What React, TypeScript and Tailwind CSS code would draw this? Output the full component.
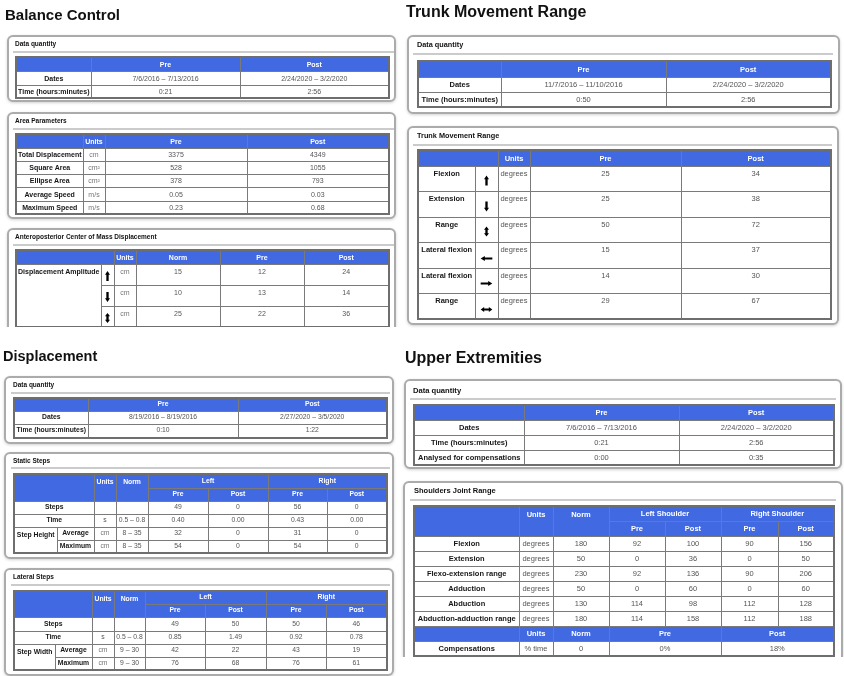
import React from 'react';

type CellProps = {
  children?: React.ReactNode;
  className?: string;
  colSpan?: number;
  rowSpan?: number;
};

const line = 'border border-[#7a7a7a]';

function Hd({ children, className = '', colSpan, rowSpan }: CellProps) {
  return (
    <th
      colSpan={colSpan}
      rowSpan={rowSpan}
      className={`${line} bg-[#4169e1] p-0 text-center font-bold whitespace-nowrap text-white ${className}`}
    >
      {children}
    </th>
  );
}

function Lb({ children, className = '', colSpan, rowSpan }: CellProps) {
  return (
    <td
      colSpan={colSpan}
      rowSpan={rowSpan}
      className={`${line} p-0 text-center font-bold whitespace-nowrap text-[#161616] ${className}`}
    >
      {children}
    </td>
  );
}

function Vl({ children, className = '', colSpan, rowSpan }: CellProps) {
  return (
    <td
      colSpan={colSpan}
      rowSpan={rowSpan}
      className={`${line} p-0 text-center whitespace-nowrap text-[#555] ${className}`}
    >
      {children}
    </td>
  );
}

type Dir = 'up' | 'down' | 'updown' | 'left' | 'right' | 'leftright';

function Arrow({ dir, className }: { dir: Dir; className?: string }) {
  const vertical = dir === 'up' || dir === 'down' || dir === 'updown';
  const paths: Record<Dir, string> = {
    up: 'M3 0 L6 4.6 H4.4 V12 H1.6 V4.6 H0 Z',
    down: 'M3 12 L6 7.4 H4.4 V0 H1.6 V7.4 H0 Z',
    updown: 'M3 0 L6 4 H4.4 V8 H6 L3 12 L0 8 H1.6 V4 H0 Z',
    left: 'M0 3 L5 0 V1.8 H14 V4.2 H5 V6 Z',
    right: 'M14 3 L9 0 V1.8 H0 V4.2 H9 V6 Z',
    leftright: 'M0 3 L4.2 0 V1.8 H9.8 V0 L14 3 L9.8 6 V4.2 H4.2 V6 Z',
  };
  return (
    <svg viewBox={vertical ? '0 0 6 12' : '0 0 14 6'} className={className}>
      <path d={paths[dir]} fill="#000" />
    </svg>
  );
}

function Card({
  className,
  title,
  titleClass,
  sepClass,
  children,
}: {
  className: string;
  title: string;
  titleClass: string;
  sepClass: string;
  children: React.ReactNode;
}) {
  return (
    <div
      className={`rounded-[6px] border-2 border-[#ababab] bg-white shadow-[0_1px_3px_rgba(0,0,0,0.18)] ${className}`}
    >
      <div className={`font-bold whitespace-nowrap text-[#111] ${titleClass}`}>{title}</div>
      <div className={`h-[2px] bg-[#cbcbcb] ${sepClass}`} />
      {children}
    </div>
  );
}

function BalanceControl() {
  return (
    <section className="h-[327px] overflow-hidden">
      <h1 className="h-[35px] pl-[5px] pt-[6px] text-[15px] leading-[18px] font-bold text-[#111]">
        Balance Control
      </h1>

      <Card
        className="ml-[7px] w-[389px] pb-[1px]"
        title="Data quantity"
        titleClass="h-[14px] pl-[6px] text-[6.5px] leading-[14px]"
        sepClass="ml-[4px]"
      >
        <table className="mt-[3px] ml-[6px] w-[373px] table-fixed border-2 border-[#6e6e6e] text-[7px] leading-none">
          <colgroup>
            <col className="w-[75px]" />
            <col className="w-[149px]" />
            <col className="w-[149px]" />
          </colgroup>
          <tbody>
            <tr className="h-[14px]">
              <Hd />
              <Hd>Pre</Hd>
              <Hd>Post</Hd>
            </tr>
            <tr className="h-[14px]">
              <Lb>Dates</Lb>
              <Vl>7/6/2016 – 7/13/2016</Vl>
              <Vl>2/24/2020 – 3/2/2020</Vl>
            </tr>
            <tr className="h-[13px]">
              <Lb>Time (hours:minutes)</Lb>
              <Vl>0:21</Vl>
              <Vl>2:56</Vl>
            </tr>
          </tbody>
        </table>
      </Card>

      <Card
        className="mt-[10px] ml-[7px] w-[389px] pb-[2px]"
        title="Area Parameters"
        titleClass="h-[14px] pl-[6px] text-[6.5px] leading-[14px]"
        sepClass="ml-[4px]"
      >
        <table className="mt-[3px] ml-[6px] w-[373px] table-fixed border-2 border-[#6e6e6e] text-[7px] leading-none">
          <colgroup>
            <col className="w-[67px]" />
            <col className="w-[22px]" />
            <col className="w-[142px]" />
            <col className="w-[142px]" />
          </colgroup>
          <tbody>
            <tr className="h-[14px]">
              <Hd />
              <Hd>Units</Hd>
              <Hd>Pre</Hd>
              <Hd>Post</Hd>
            </tr>
            <tr className="h-[13px]">
              <Lb>Total Displacement</Lb>
              <Vl className="text-[#777]">cm</Vl>
              <Vl>3375</Vl>
              <Vl>4349</Vl>
            </tr>
            <tr className="h-[13px]">
              <Lb>Square Area</Lb>
              <Vl className="text-[#777]">cm²</Vl>
              <Vl>528</Vl>
              <Vl>1055</Vl>
            </tr>
            <tr className="h-[13px]">
              <Lb>Ellipse Area</Lb>
              <Vl className="text-[#777]">cm²</Vl>
              <Vl>378</Vl>
              <Vl>793</Vl>
            </tr>
            <tr className="h-[14px]">
              <Lb>Average Speed</Lb>
              <Vl className="text-[#777]">m/s</Vl>
              <Vl>0.05</Vl>
              <Vl>0.03</Vl>
            </tr>
            <tr className="h-[13px]">
              <Lb>Maximum Speed</Lb>
              <Vl className="text-[#777]">m/s</Vl>
              <Vl>0.23</Vl>
              <Vl>0.68</Vl>
            </tr>
          </tbody>
        </table>
      </Card>

      <Card
        className="mt-[9px] ml-[7px] w-[389px] pb-[3px]"
        title="Anteroposterior Center of Mass Displacement"
        titleClass="h-[14px] pl-[6px] text-[6.5px] leading-[14px]"
        sepClass="ml-[4px]"
      >
        <table className="mt-[3px] ml-[6px] w-[373px] table-fixed border-2 border-[#6e6e6e] text-[7px] leading-none">
          <colgroup>
            <col className="w-[85px]" />
            <col className="w-[13px]" />
            <col className="w-[22px]" />
            <col className="w-[84px]" />
            <col className="w-[84px]" />
            <col className="w-[85px]" />
          </colgroup>
          <tbody>
            <tr className="h-[14px]">
              <Hd colSpan={2} />
              <Hd>Units</Hd>
              <Hd>Norm</Hd>
              <Hd>Pre</Hd>
              <Hd>Post</Hd>
            </tr>
            <tr className="h-[21px]">
              <Lb rowSpan={3} className="pt-[3px] align-top">
                Displacement Amplitude
              </Lb>
              <td className={line}>
                <Arrow dir="up" className="mx-auto mt-[3px] h-[10px] w-[5px]" />
              </td>
              <Vl className="pt-[3px] align-top text-[#777]">cm</Vl>
              <Vl className="pt-[3px] align-top">15</Vl>
              <Vl className="pt-[3px] align-top">12</Vl>
              <Vl className="pt-[3px] align-top">24</Vl>
            </tr>
            <tr className="h-[21px]">
              <td className={line}>
                <Arrow dir="down" className="mx-auto mt-[3px] h-[10px] w-[5px]" />
              </td>
              <Vl className="pt-[3px] align-top text-[#777]">cm</Vl>
              <Vl className="pt-[3px] align-top">10</Vl>
              <Vl className="pt-[3px] align-top">13</Vl>
              <Vl className="pt-[3px] align-top">14</Vl>
            </tr>
            <tr className="h-[21px]">
              <td className={line}>
                <Arrow dir="updown" className="mx-auto mt-[3px] h-[10px] w-[5px]" />
              </td>
              <Vl className="pt-[3px] align-top text-[#777]">cm</Vl>
              <Vl className="pt-[3px] align-top">25</Vl>
              <Vl className="pt-[3px] align-top">22</Vl>
              <Vl className="pt-[3px] align-top">36</Vl>
            </tr>
          </tbody>
        </table>
      </Card>
    </section>
  );
}

function Displacement() {
  return (
    <section className="h-[349px] overflow-hidden">
      <h1 className="h-[49px] pl-[3px] pt-[20px] text-[14.5px] leading-[18px] font-bold text-[#111]">
        Displacement
      </h1>

      <Card
        className="ml-[4px] w-[390px] pb-[3px]"
        title="Data quantity"
        titleClass="h-[14px] pl-[7px] text-[6.5px] leading-[14px]"
        sepClass="ml-[5px] mr-[2px]"
      >
        <table className="mt-[3px] ml-[7px] w-[373px] table-fixed border-2 border-[#6e6e6e] text-[6.8px] leading-none">
          <colgroup>
            <col className="w-[74px]" />
            <col className="w-[150px]" />
            <col className="w-[149px]" />
          </colgroup>
          <tbody>
            <tr className="h-[13px]">
              <Hd />
              <Hd>Pre</Hd>
              <Hd>Post</Hd>
            </tr>
            <tr className="h-[13px]">
              <Lb>Dates</Lb>
              <Vl>8/19/2016 – 8/19/2016</Vl>
              <Vl>2/27/2020 – 3/5/2020</Vl>
            </tr>
            <tr className="h-[14px]">
              <Lb>Time (hours:minutes)</Lb>
              <Vl>0:10</Vl>
              <Vl>1:22</Vl>
            </tr>
          </tbody>
        </table>
      </Card>

      <Card
        className="mt-[8px] ml-[4px] w-[390px] pb-[3px]"
        title="Static Steps"
        titleClass="h-[13px] pl-[7px] text-[6.5px] leading-[13px]"
        sepClass="ml-[5px] mr-[2px]"
      >
        <table className="mt-[4px] ml-[7px] w-[373px] table-fixed border-2 border-[#6e6e6e] text-[6.8px] leading-none">
          <colgroup>
            <col className="w-[43px]" />
            <col className="w-[37px]" />
            <col className="w-[22px]" />
            <col className="w-[32px]" />
            <col className="w-[60px]" />
            <col className="w-[60px]" />
            <col className="w-[59px]" />
            <col className="w-[60px]" />
          </colgroup>
          <tbody>
            <tr className="h-[14px]">
              <Hd colSpan={2} rowSpan={2} />
              <Hd rowSpan={2} className="align-top leading-[13px]">
                Units
              </Hd>
              <Hd rowSpan={2} className="align-top leading-[13px]">
                Norm
              </Hd>
              <Hd colSpan={2}>Left</Hd>
              <Hd colSpan={2}>Right</Hd>
            </tr>
            <tr className="h-[13px]">
              <Hd>Pre</Hd>
              <Hd>Post</Hd>
              <Hd>Pre</Hd>
              <Hd>Post</Hd>
            </tr>
            <tr className="h-[13px]">
              <Lb colSpan={2}>Steps</Lb>
              <Vl />
              <Vl />
              <Vl>49</Vl>
              <Vl>0</Vl>
              <Vl>56</Vl>
              <Vl>0</Vl>
            </tr>
            <tr className="h-[13px]">
              <Lb colSpan={2}>Time</Lb>
              <Vl>s</Vl>
              <Vl>0.5 – 0.8</Vl>
              <Vl>0.40</Vl>
              <Vl>0.00</Vl>
              <Vl>0.43</Vl>
              <Vl>0.00</Vl>
            </tr>
            <tr className="h-[13px]">
              <Lb rowSpan={2} className="align-top leading-[13px]">
                Step Height
              </Lb>
              <Lb>Average</Lb>
              <Vl className="text-[#777]">cm</Vl>
              <Vl>8 – 35</Vl>
              <Vl>32</Vl>
              <Vl>0</Vl>
              <Vl>31</Vl>
              <Vl>0</Vl>
            </tr>
            <tr className="h-[13px]">
              <Lb>Maximum</Lb>
              <Vl className="text-[#777]">cm</Vl>
              <Vl>8 – 35</Vl>
              <Vl>54</Vl>
              <Vl>0</Vl>
              <Vl>54</Vl>
              <Vl>0</Vl>
            </tr>
          </tbody>
        </table>
      </Card>

      <Card
        className="mt-[9px] ml-[4px] w-[390px] pb-[3px]"
        title="Lateral Steps"
        titleClass="h-[14px] pl-[7px] text-[6.5px] leading-[14px]"
        sepClass="ml-[5px] mr-[2px]"
      >
        <table className="mt-[4px] ml-[7px] w-[373px] table-fixed border-2 border-[#6e6e6e] text-[6.8px] leading-none">
          <colgroup>
            <col className="w-[41px]" />
            <col className="w-[37px]" />
            <col className="w-[22px]" />
            <col className="w-[31px]" />
            <col className="w-[60px]" />
            <col className="w-[61px]" />
            <col className="w-[60px]" />
            <col className="w-[61px]" />
          </colgroup>
          <tbody>
            <tr className="h-[13px]">
              <Hd colSpan={2} rowSpan={2} />
              <Hd rowSpan={2} className="align-top leading-[13px]">
                Units
              </Hd>
              <Hd rowSpan={2} className="align-top leading-[13px]">
                Norm
              </Hd>
              <Hd colSpan={2}>Left</Hd>
              <Hd colSpan={2}>Right</Hd>
            </tr>
            <tr className="h-[13px]">
              <Hd>Pre</Hd>
              <Hd>Post</Hd>
              <Hd>Pre</Hd>
              <Hd>Post</Hd>
            </tr>
            <tr className="h-[14px]">
              <Lb colSpan={2}>Steps</Lb>
              <Vl />
              <Vl />
              <Vl>49</Vl>
              <Vl>50</Vl>
              <Vl>50</Vl>
              <Vl>46</Vl>
            </tr>
            <tr className="h-[13px]">
              <Lb colSpan={2}>Time</Lb>
              <Vl>s</Vl>
              <Vl>0.5 – 0.8</Vl>
              <Vl>0.85</Vl>
              <Vl>1.49</Vl>
              <Vl>0.92</Vl>
              <Vl>0.78</Vl>
            </tr>
            <tr className="h-[13px]">
              <Lb rowSpan={2} className="align-top leading-[13px]">
                Step Width
              </Lb>
              <Lb>Average</Lb>
              <Vl className="text-[#777]">cm</Vl>
              <Vl>9 – 30</Vl>
              <Vl>42</Vl>
              <Vl>22</Vl>
              <Vl>43</Vl>
              <Vl>19</Vl>
            </tr>
            <tr className="h-[13px]">
              <Lb>Maximum</Lb>
              <Vl className="text-[#777]">cm</Vl>
              <Vl>9 – 30</Vl>
              <Vl>76</Vl>
              <Vl>68</Vl>
              <Vl>76</Vl>
              <Vl>61</Vl>
            </tr>
          </tbody>
        </table>
      </Card>
    </section>
  );
}

const trunkRows: { label: string; dir: Dir; pre: string; post: string }[] = [
  { label: 'Flexion', dir: 'up', pre: '25', post: '34' },
  { label: 'Extension', dir: 'down', pre: '25', post: '38' },
  { label: 'Range', dir: 'updown', pre: '50', post: '72' },
  { label: 'Lateral flexion', dir: 'left', pre: '15', post: '37' },
  { label: 'Lateral flexion', dir: 'right', pre: '14', post: '30' },
  { label: 'Range', dir: 'leftright', pre: '29', post: '67' },
];

function TrunkMovement() {
  return (
    <section className="h-[335px] overflow-hidden">
      <h1 className="h-[35px] pl-[6px] pt-[3px] text-[16px] leading-[18px] font-bold text-[#111]">
        Trunk Movement Range
      </h1>

      <Card
        className="ml-[7px] w-[433px] pb-[4px]"
        title="Data quantity"
        titleClass="h-[16px] pl-[8px] text-[7.3px] leading-[16px]"
        sepClass="ml-[4px] mr-[5px]"
      >
        <table className="mt-[5px] ml-[8px] w-[413px] table-fixed border-2 border-[#6e6e6e] text-[7.5px] leading-none">
          <colgroup>
            <col className="w-[83px]" />
            <col className="w-[165px]" />
            <col className="w-[165px]" />
          </colgroup>
          <tbody>
            <tr className="h-[16px]">
              <Hd />
              <Hd>Pre</Hd>
              <Hd>Post</Hd>
            </tr>
            <tr className="h-[15px]">
              <Lb>Dates</Lb>
              <Vl>11/7/2016 – 11/10/2016</Vl>
              <Vl>2/24/2020 – 3/2/2020</Vl>
            </tr>
            <tr className="h-[15px]">
              <Lb>Time (hours:minutes)</Lb>
              <Vl>0:50</Vl>
              <Vl>2:56</Vl>
            </tr>
          </tbody>
        </table>
      </Card>

      <Card
        className="mt-[12px] ml-[7px] w-[432px] pb-[3px]"
        title="Trunk Movement Range"
        titleClass="h-[16px] pl-[8px] text-[7.3px] leading-[16px]"
        sepClass="ml-[4px] mr-[5px]"
      >
        <table className="mt-[3px] ml-[8px] w-[413px] table-fixed border-2 border-[#6e6e6e] text-[7.5px] leading-none">
          <colgroup>
            <col className="w-[57px]" />
            <col className="w-[23px]" />
            <col className="w-[32px]" />
            <col className="w-[151px]" />
            <col className="w-[150px]" />
          </colgroup>
          <tbody>
            <tr className="h-[16px]">
              <Hd colSpan={2} />
              <Hd>Units</Hd>
              <Hd>Pre</Hd>
              <Hd>Post</Hd>
            </tr>
            {trunkRows.map((r, i) => (
              <tr key={i} className="h-[25.5px]">
                <Lb className="pt-[3px] align-top">{r.label}</Lb>
                <td className={line}>
                  {r.dir === 'up' || r.dir === 'down' || r.dir === 'updown' ? (
                    <Arrow dir={r.dir} className="mx-auto mt-[4px] h-[11px] w-[5px]" />
                  ) : (
                    <Arrow dir={r.dir} className="mx-auto mt-[6px] h-[5px] w-[13px]" />
                  )}
                </td>
                <Vl className="pt-[3px] align-top">degrees</Vl>
                <Vl className="pt-[3px] align-top">{r.pre}</Vl>
                <Vl className="pt-[3px] align-top">{r.post}</Vl>
              </tr>
            ))}
          </tbody>
        </table>
      </Card>
    </section>
  );
}

const shoulderRows = [
  ['Flexion', '180', '92', '100', '90', '156'],
  ['Extension', '50', '0', '36', '0', '50'],
  ['Flexo-extension range', '230', '92', '136', '90', '206'],
  ['Adduction', '50', '0', '60', '0', '60'],
  ['Abduction', '130', '114', '98', '112', '128'],
  ['Abduction-adduction range', '180', '114', '158', '112', '188'],
];

function UpperExtremities() {
  return (
    <section className="h-[322px] overflow-hidden">
      <h1 className="h-[44px] pl-[5px] pt-[14px] text-[16px] leading-[18px] font-bold text-[#111]">
        Upper Extremities
      </h1>

      <Card
        className="ml-[4px] w-[438px] pb-[1px]"
        title="Data quantity"
        titleClass="h-[17px] pl-[7px] pt-[3px] text-[7.6px] leading-[14px]"
        sepClass="mx-[4px]"
      >
        <table className="mt-[4px] ml-[7px] w-[420px] table-fixed border-2 border-[#6e6e6e] text-[7.5px] leading-none">
          <colgroup>
            <col className="w-[110px]" />
            <col className="w-[155px]" />
            <col className="w-[155px]" />
          </colgroup>
          <tbody>
            <tr className="h-[15px]">
              <Hd />
              <Hd>Pre</Hd>
              <Hd>Post</Hd>
            </tr>
            <tr className="h-[15px]">
              <Lb>Dates</Lb>
              <Vl>7/6/2016 – 7/13/2016</Vl>
              <Vl>2/24/2020 – 3/2/2020</Vl>
            </tr>
            <tr className="h-[15px]">
              <Lb>Time (hours:minutes)</Lb>
              <Vl>0:21</Vl>
              <Vl>2:56</Vl>
            </tr>
            <tr className="h-[15px]">
              <Lb>Analysed for compensations</Lb>
              <Vl>0:00</Vl>
              <Vl>0:35</Vl>
            </tr>
          </tbody>
        </table>
      </Card>

      <Card
        className="mt-[12px] ml-[3px] w-[440px] pb-[3px]"
        title="Shoulders Joint Range"
        titleClass="h-[16px] pl-[9px] pt-[1px] text-[7.5px] leading-[14px]"
        sepClass="ml-[5px] mr-[5px]"
      >
        <table className="mt-[4px] ml-[8px] w-[420px] table-fixed border-2 border-[#6e6e6e] text-[7.5px] leading-none">
          <colgroup>
            <col className="w-[105px]" />
            <col className="w-[34px]" />
            <col className="w-[56px]" />
            <col className="w-[56px]" />
            <col className="w-[56px]" />
            <col className="w-[57px]" />
            <col className="w-[56px]" />
          </colgroup>
          <tbody>
            <tr className="h-[15px]">
              <Hd rowSpan={2} />
              <Hd rowSpan={2} className="align-top leading-[15px]">
                Units
              </Hd>
              <Hd rowSpan={2} className="align-top leading-[15px]">
                Norm
              </Hd>
              <Hd colSpan={2}>Left Shoulder</Hd>
              <Hd colSpan={2}>Right Shoulder</Hd>
            </tr>
            <tr className="h-[15px]">
              <Hd>Pre</Hd>
              <Hd>Post</Hd>
              <Hd>Pre</Hd>
              <Hd>Post</Hd>
            </tr>
            {shoulderRows.map((r) => (
              <tr key={r[0]} className="h-[15px]">
                <Lb>{r[0]}</Lb>
                <Vl>degrees</Vl>
                <Vl>{r[1]}</Vl>
                <Vl>{r[2]}</Vl>
                <Vl>{r[3]}</Vl>
                <Vl>{r[4]}</Vl>
                <Vl>{r[5]}</Vl>
              </tr>
            ))}
            <tr className="h-[15px]">
              <Hd />
              <Hd>Units</Hd>
              <Hd>Norm</Hd>
              <Hd colSpan={2}>Pre</Hd>
              <Hd colSpan={2}>Post</Hd>
            </tr>
            <tr className="h-[15px]">
              <Lb>Compensations</Lb>
              <Vl>% time</Vl>
              <Vl>0</Vl>
              <Vl colSpan={2}>0%</Vl>
              <Vl colSpan={2}>18%</Vl>
            </tr>
          </tbody>
        </table>
      </Card>
    </section>
  );
}

export default function App() {
  return (
    <div className="h-[676px] w-[844px] overflow-hidden bg-white">
      {/* own layer without a background so small text gets grey antialiasing */}
      <div className="flex h-full w-full font-['Liberation_Sans',Arial,sans-serif] antialiased [will-change:transform]">
        <div className="flex w-[400px] flex-col">
          <BalanceControl />
          <Displacement />
        </div>
        <div className="flex w-[444px] flex-col">
          <TrunkMovement />
          <UpperExtremities />
        </div>
      </div>
    </div>
  );
}
